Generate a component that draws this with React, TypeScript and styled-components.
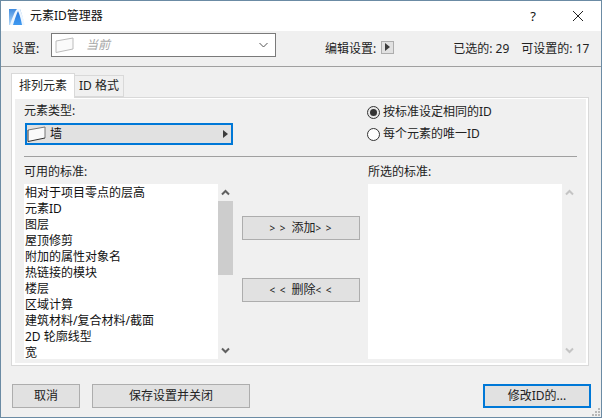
import styled, { createGlobalStyle } from 'styled-components';

const criteria = [
  '相对于项目零点的层高',
  '元素ID',
  '图层',
  '屋顶修剪',
  '附加的属性对象名',
  '热链接的模块',
  '楼层',
  '区域计算',
  '建筑材料/复合材料/截面',
  '2D 轮廓线型',
  '宽',
];

const GlobalStyle = createGlobalStyle`
  html, body {
    margin: 0;
    padding: 0;
    background: #f0f0f0;
  }
  * {
    box-sizing: border-box;
  }
`;

const Window = styled.div`
  position: relative;
  width: 602px;
  height: 418px;
  display: flex;
  flex-direction: column;
  background: #f0f0f0;
  border: 1px solid #6b8ba4;
  font-family: 'Noto Sans', 'Noto Sans CJK SC', sans-serif;
  font-size: 12px;
  line-height: 16px;
  color: #222;
  overflow: hidden;
`;

const TitleBar = styled.div`
  height: 30px;
  flex: none;
  display: flex;
  align-items: center;
  padding-left: 8px;
  background: #fff;
  color: #111;
`;

const TitleText = styled.span`
  margin-left: 4px;
  flex: 1;
`;

const HelpMark = styled.span`
  width: 14px;
  margin-right: 32px;
  text-align: center;
  font-size: 13px;
`;

const CloseMark = styled.svg`
  margin-right: 17px;
`;

const Toolbar = styled.div`
  height: 36px;
  flex: none;
  display: flex;
  align-items: center;
  padding: 0 10px 0 11px;
  border-bottom: 1px solid #a0a0a0;
  margin-bottom: 6px;
`;

const ToolLabel = styled.span`
  width: 39px;
`;

const SettingsSelect = styled.div`
  width: 225px;
  height: 24px;
  margin-top: -8px;
  display: flex;
  align-items: center;
  padding: 0 7px 0 3px;
  background: #fff;
  border: 1px solid #7a7a7a;
`;

const CurrentText = styled.span`
  flex: 1;
  margin-left: 12px;
  color: #a8a8a8;
  font-style: italic;
`;

const EditLabel = styled.span`
  margin-left: 49px;
`;

const SmallArrowButton = styled.div`
  width: 13px;
  height: 13px;
  margin: -3px 0 0 5px;
  display: flex;
  align-items: center;
  justify-content: center;
  background: #e1e1e1;
  border: 1px solid #adadad;
`;

const Stat = styled.span<{ $gap: number }>`
  margin-left: ${({ $gap }) => $gap}px;
  white-space: nowrap;
`;

const TabStrip = styled.div`
  height: 24px;
  flex: none;
  display: flex;
  align-items: flex-end;
  padding-left: 10px;
`;

const Tab = styled.div<{ $active?: boolean }>`
  display: flex;
  align-items: center;
  justify-content: center;
  width: ${({ $active }) => ($active ? 64 : 49)}px;
  height: ${({ $active }) => ($active ? 25 : 22)}px;
  margin-bottom: ${({ $active }) => ($active ? -1 : 0)}px;
  border: 1px solid #d9d9d9;
  border-bottom: ${({ $active }) => ($active ? 'none' : '1px solid #d9d9d9')};
  border-left: ${({ $active }) => ($active ? '1px solid #d9d9d9' : 'none')};
  background: ${({ $active }) => ($active ? '#fff' : '#f0f0f0')};
  position: relative;
  z-index: ${({ $active }) => ($active ? 1 : 0)};
`;

const Panel = styled.div`
  width: 578px;
  height: 269px;
  margin-left: 10px;
  flex: none;
  padding: 5px 11px 4px 12px;
  background: #f0f0f0;
  border: 1px solid #d9d9d9;
  box-shadow: inset 3px 1px 0 #fff, inset -2px -2px 0 #fff;
`;

const TypeRow = styled.div`
  height: 53px;
  display: grid;
  grid-template-columns: 343px 1fr;
`;

const TypeLabel = styled.div`
  margin-bottom: 4px;
`;

const TypeSelect = styled.div`
  width: 208px;
  height: 22px;
  margin-left: 1px;
  display: flex;
  align-items: center;
  padding: 0 3px 0 0;
  background: #e1e1e1;
  border: 2px solid #0078d7;
  color: #111;
`;

const TypeText = styled.span`
  flex: 1;
  margin-left: 4px;
`;

const RadioGroup = styled.div`
  display: flex;
  flex-direction: column;
  gap: 6px;
  padding-top: 1px;
`;

const RadioRow = styled.div`
  display: flex;
  align-items: center;
  gap: 3px;
`;

const RadioCircle = styled.span<{ $checked?: boolean }>`
  width: 13px;
  height: 13px;
  display: flex;
  align-items: center;
  justify-content: center;
  background: ${({ $checked }) => ($checked ? '#e8e8e8' : '#fff')};
  border: 1px solid #333;
  border-radius: 50%;

  &::after {
    content: '';
    width: 7px;
    height: 7px;
    border-radius: 50%;
    background: ${({ $checked }) => ($checked ? '#333' : 'transparent')};
  }
`;

const Divider = styled.div`
  height: 1px;
  background: #a0a0a0;
`;

const Lists = styled.div`
  margin-top: 7px;
  display: grid;
  grid-template-columns: 218px 126px 209px;
`;

const ListColumn = styled.div`
  width: 209px;
  display: flex;
  flex-direction: column;
`;

const ListLabel = styled.div`
  height: 20px;
`;

const ListFrame = styled.div`
  height: 175px;
  display: grid;
  grid-template-columns: 194px 15px;
`;

const ListBody = styled.div`
  padding-top: 1px;
  background: #fff;
  overflow: hidden;
`;

const ListItem = styled.div`
  height: 16px;
  padding-left: 1px;
  white-space: nowrap;
  color: #111;
`;

const ScrollTrack = styled.div`
  display: flex;
  flex-direction: column;
  align-items: center;
`;

const ScrollCap = styled.div`
  width: 15px;
  height: 17px;
  flex: none;
  display: flex;
  align-items: center;
  justify-content: center;
`;

const ScrollThumb = styled.div`
  width: 15px;
  height: 74px;
  background: #cdcdcd;
`;

const ScrollSpace = styled.div`
  flex: 1;
`;

const MoveColumn = styled.div`
  width: 118px;
  display: flex;
  flex-direction: column;
  gap: 38px;
  padding-top: 52px;
`;

const Button = styled.button<{ $width?: number; $primary?: boolean }>`
  width: ${({ $width }) => ($width ? `${$width}px` : '100%')};
  height: 24px;
  padding: 0;
  background: #e1e1e1;
  border: ${({ $primary }) => ($primary ? '2px solid #0078d7' : '1px solid #adadad')};
  font: inherit;
  color: #222;
`;

const MoveMarks = styled.span`
  font-size: 10px;
  letter-spacing: 1px;
`;

const MoveText = styled.span`
  margin: 0 0 0 5px;
`;

const Footer = styled.div`
  display: flex;
  gap: 12px;
  margin-top: 18px;
  padding: 0 10px 0 11px;
`;

const FooterSpacer = styled.div`
  flex: 1;
`;

const ResizeGrip = styled.svg`
  position: absolute;
  right: 0;
  bottom: 0;
`;

const WallIcon = ({ dark, light }: { dark: string; light: string }) => (
  <svg width="19" height="18" viewBox="0 0 19 18">
    <path d="M1 5 L18 2 V13 L1 16.5 Z" fill="#fafafa" />
    <path d="M1 5 L18 2 V13" fill="none" stroke={light} />
    <path d="M1 5 V16.5 L18 13" fill="none" stroke={dark} />
  </svg>
);

const Chevron = ({ up, color }: { up?: boolean; color: string }) => (
  <svg width="9" height="7" viewBox="0 0 9 7">
    <path d={up ? 'M1 5.5 L4.5 2 L8 5.5' : 'M1 1.5 L4.5 5 L8 1.5'} fill="none" stroke={color} strokeWidth="2" />
  </svg>
);

const ArrowRight = () => (
  <svg width="5" height="8" viewBox="0 0 5 8">
    <path d="M0 0 L5 4 L0 8 Z" fill="#3c3c3c" />
  </svg>
);

const AppIcon = () => (
  <svg width="17" height="17" viewBox="0 0 17 17">
    <defs>
      <linearGradient id="appIconBack" x1="0" y1="0" x2="0" y2="1">
        <stop offset="0" stopColor="#3f8ce0" />
        <stop offset="1" stopColor="#b5d9f8" />
      </linearGradient>
      <linearGradient id="appIconPeak" x1="0" y1="0" x2="0" y2="1">
        <stop offset="0" stopColor="#2a78dc" />
        <stop offset="1" stopColor="#3f9af0" />
      </linearGradient>
    </defs>
    <rect x="0" y="1" width="16" height="16" fill="url(#appIconBack)" />
    <path d="M1 17 C3 10 6 3 8 1 H11 C13 6 15 12 16 17 Z" fill="#eef6fe" />
    <path d="M4 17 C6 10 8 5 9 3 C11 7 12 12 13 17 Z" fill="url(#appIconPeak)" />
    <path d="M11 1 H16 V17 H15.5 C14.5 12 13 6 11 1 Z" fill="#fff" />
  </svg>
);

const App = () => (
  <>
    <GlobalStyle />
    <Window>
      <TitleBar>
        <AppIcon />
        <TitleText>元素ID管理器</TitleText>
        <HelpMark>?</HelpMark>
        <CloseMark width="12" height="12" viewBox="0 0 12 12">
          <path d="M1 1 L11 11 M11 1 L1 11" stroke="#222" strokeWidth="1" />
        </CloseMark>
      </TitleBar>

      <Toolbar>
        <ToolLabel>设置:</ToolLabel>
        <SettingsSelect>
          <WallIcon dark="#bcbcbc" light="#bcbcbc" />
          <CurrentText>当前</CurrentText>
          <svg width="9" height="6" viewBox="0 0 9 6">
            <path d="M0.5 1 L4.5 5 L8.5 1" fill="none" stroke="#555" />
          </svg>
        </SettingsSelect>
        <EditLabel>编辑设置:</EditLabel>
        <SmallArrowButton>
          <ArrowRight />
        </SmallArrowButton>
        <Stat $gap={59}>已选的: 29</Stat>
        <Stat $gap={12}>可设置的: 17</Stat>
      </Toolbar>

      <TabStrip>
        <Tab $active>排列元素</Tab>
        <Tab>ID 格式</Tab>
      </TabStrip>

      <Panel>
        <TypeRow>
          <div>
            <TypeLabel>元素类型:</TypeLabel>
            <TypeSelect>
              <WallIcon dark="#333" light="#777" />
              <TypeText>墙</TypeText>
              <ArrowRight />
            </TypeSelect>
          </div>
          <RadioGroup>
            <RadioRow>
              <RadioCircle $checked />
              按标准设定相同的ID
            </RadioRow>
            <RadioRow>
              <RadioCircle />
              每个元素的唯一ID
            </RadioRow>
          </RadioGroup>
        </TypeRow>

        <Divider />

        <Lists>
          <ListColumn>
            <ListLabel>可用的标准:</ListLabel>
            <ListFrame>
              <ListBody>
                {criteria.map((item) => (
                  <ListItem key={item}>{item}</ListItem>
                ))}
              </ListBody>
              <ScrollTrack>
                <ScrollCap>
                  <Chevron up color="#606060" />
                </ScrollCap>
                <ScrollThumb />
                <ScrollSpace />
                <ScrollCap>
                  <Chevron color="#606060" />
                </ScrollCap>
              </ScrollTrack>
            </ListFrame>
          </ListColumn>

          <MoveColumn>
            <Button>
              <MoveMarks>&gt; &gt;</MoveMarks>
              <MoveText>添加</MoveText>
              <MoveMarks>&gt; &gt;</MoveMarks>
            </Button>
            <Button>
              <MoveMarks>&lt; &lt;</MoveMarks>
              <MoveText>删除</MoveText>
              <MoveMarks>&lt; &lt;</MoveMarks>
            </Button>
          </MoveColumn>

          <ListColumn>
            <ListLabel>所选的标准:</ListLabel>
            <ListFrame>
              <ListBody />
              <ScrollTrack>
                <ScrollCap>
                  <Chevron up color="#c4c4c4" />
                </ScrollCap>
                <ScrollSpace />
                <ScrollCap>
                  <Chevron color="#c4c4c4" />
                </ScrollCap>
              </ScrollTrack>
            </ListFrame>
          </ListColumn>
        </Lists>
      </Panel>

      <Footer>
        <Button $width={68}>取消</Button>
        <Button $width={158}>保存设置并关闭</Button>
        <FooterSpacer />
        <Button $width={108} $primary>修改ID的...</Button>
      </Footer>

      <ResizeGrip width="10" height="10" viewBox="0 0 10 10">
        <path d="M7 1h2v2H7z M4 4h2v2H4z M7 4h2v2H7z M1 7h2v2H1z M4 7h2v2H4z M7 7h2v2H7z" fill="#b8b8b8" />
      </ResizeGrip>
    </Window>
  </>
);

export default App;
